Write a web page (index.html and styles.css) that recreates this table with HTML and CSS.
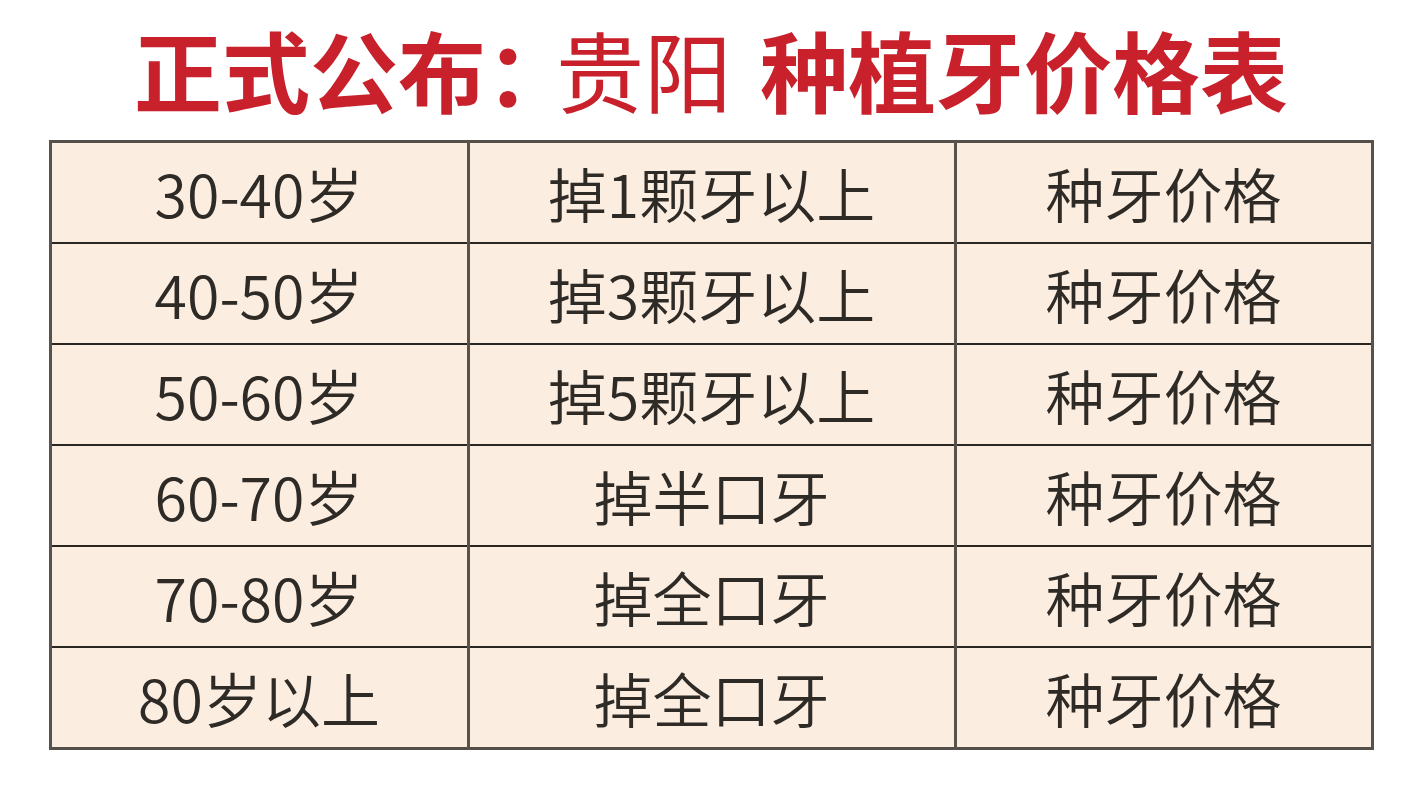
FILE: index.html
```html
<!DOCTYPE html>
<html lang="zh">
<head>
<meta charset="utf-8">
<link rel="stylesheet" href="styles.css">
</head>
<body>
<div class="page">
  <h1 class="title"><span class="b">正式公布</span><span class="b colon">：</span><span class="r">贵阳</span> <span class="b">种植牙价格表</span></h1>
  <table class="price">
    <colgroup><col class="c1"><col class="c2"><col class="c3"></colgroup>
    <tr><td>30-40岁</td><td>掉1颗牙以上</td><td>种牙价格</td></tr>
    <tr><td>40-50岁</td><td>掉3颗牙以上</td><td>种牙价格</td></tr>
    <tr><td>50-60岁</td><td>掉5颗牙以上</td><td>种牙价格</td></tr>
    <tr><td>60-70岁</td><td>掉半口牙</td><td>种牙价格</td></tr>
    <tr><td>70-80岁</td><td>掉全口牙</td><td>种牙价格</td></tr>
    <tr><td>80岁以上</td><td>掉全口牙</td><td>种牙价格</td></tr>
  </table>
</div>
</body>
</html>
```

FILE: styles.css
```css
html, body {
  margin: 0;
  padding: 0;
  background: #ffffff;
}
.page {
  width: 1422px;
  height: 800px;
  display: flex;
  flex-direction: column;
  align-items: center;
  font-family: "Noto Sans CJK SC", "Noto Sans", sans-serif;
}
.title {
  margin: 0;
  height: 140px;
  line-height: 136px;
  font-size: 88px;
  color: #c8212b;
  white-space: nowrap;
  letter-spacing: 0;
}
.title .b { font-weight: 700; }
.title .colon {
  font-feature-settings: "halt";
  margin-right: 26px;
}
.title .r { font-weight: 400; margin-right: 8px; }
.price {
  width: 1322px;
  border-collapse: collapse;
  border: 3px solid #545049;
  table-layout: fixed;
}
.c1 { width: 418px; }
.c2 { width: 487px; }
.c3 { width: 417px; }
.price td {
  height: 99px;
  padding: 0;
  background: #fcede1;
  border-left: 3px solid #57524b;
  border-right: 3px solid #57524b;
  border-top: 2px solid #2a2621;
  border-bottom: 2px solid #2a2621;
  text-align: center;
  vertical-align: middle;
  font-size: 59px;
  line-height: 1;
  color: #2e2a26;
  font-weight: 350;
}
```
